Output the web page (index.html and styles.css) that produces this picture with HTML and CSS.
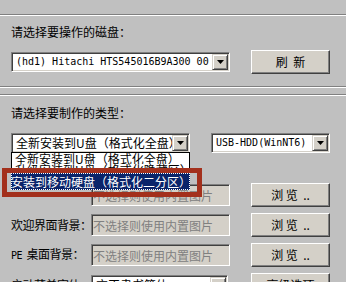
FILE: index.html
```html
<!DOCTYPE html>
<html lang="zh-CN">
<head>
  <meta charset="UTF-8" />
  <title>U盘启动制作</title>
  <link rel="stylesheet" href="styles.css">
</head>
<body>
  <div class="rule"></div>

  <section class="group">
    <label class="caption">请选择要操作的磁盘：</label>
    <div class="row">
      <div class="combo disk">
        <span class="value mono">(hd1) Hitachi HTS545016B9A300 00</span>
        <span class="drop"><svg width="7" height="4" viewBox="0 0 7 4"><path d="M0 0h7L3.5 4z"/></svg></span>
      </div>
      <button type="button" class="btn">刷&nbsp;&nbsp;新</button>
    </div>
  </section>

  <div class="rule near"></div>
  <div class="rule tight"></div>

  <section class="group kind">
    <label class="caption">请选择要制作的类型：</label>
    <div class="row type-row">
      <div class="combo type">
        <span class="value">全新安装到U盘（格式化全盘）</span>
        <span class="drop"><svg width="7" height="4" viewBox="0 0 7 4"><path d="M0 0h7L3.5 4z"/></svg></span>
        <ul class="droplist">
          <li>全新安装到U盘（格式化全盘）</li>
          <li>升级安装到U盘（格式化隐藏区）</li>
          <li class="sel">安装到移动硬盘（格式化二分区）</li>
        </ul>
      </div>
      <div class="combo mode">
        <span class="value mono">USB-HDD(WinNT6)</span>
        <span class="drop"><svg width="7" height="4" viewBox="0 0 7 4"><path d="M0 0h7L3.5 4z"/></svg></span>
      </div>
    </div>

    <div class="fields">
      <div class="field">
        <span class="name"></span>
        <input type="text" class="path" disabled placeholder="不选择则使用内置图片" />
        <button type="button" class="btn">浏&nbsp;览&nbsp;&nbsp;..</button>
      </div>
      <div class="field">
        <span class="name">欢迎界面背景：</span>
        <input type="text" class="path" disabled placeholder="不选择则使用内置图片" />
        <button type="button" class="btn">浏&nbsp;览&nbsp;&nbsp;..</button>
      </div>
      <div class="field">
        <span class="name"><span class="mono">PE</span>&nbsp; 桌面背景：</span>
        <input type="text" class="path" disabled placeholder="不选择则使用内置图片" />
        <button type="button" class="btn">浏&nbsp;览&nbsp;&nbsp;..</button>
      </div>
      <div class="field">
        <span class="name">启动菜单字体：</span>
        <div class="combo font">
          <span class="value">方正隶书简体</span>
          <span class="drop"><svg width="7" height="4" viewBox="0 0 7 4"><path d="M0 0h7L3.5 4z"/></svg></span>
        </div>
        <button type="button" class="btn">高级选项</button>
      </div>
    </div>
  </section>

  <div class="callout"><span class="pick">安装到移动硬盘（格式化二分区）</span></div>
</body>
</html>
```

FILE: styles.css
```css
body {
  margin: 0;
  width: 346px;
  height: 282px;
  overflow: hidden;
  background: #c0c0c0;
  font-family: "Noto Sans CJK SC", "Noto Sans", sans-serif;
  font-size: 12px;
  line-height: 14px;
  color: #000;
}
.mono {
  font-family: "DejaVu Sans Mono", "Liberation Mono", monospace;
  font-size: 10px;
}
.rule {
  margin-top: 14px;
  border-top: 1px solid #808080;
  border-bottom: 1px solid #fff;
}
.rule.near {
  margin-top: 12px;
}
.rule.tight {
  margin-top: 6px;
}
.group {
  padding: 0 16px 0 11px;
}
.caption {
  display: block;
  padding-top: 9px;
}
.kind .caption {
  padding-top: 10px;
}
.row {
  display: flex;
  align-items: center;
  justify-content: space-between;
  height: 24px;
  margin-top: 11px;
}
.type-row {
  height: 20px;
  margin-top: 13px;
}
.combo {
  position: relative;
  display: flex;
  height: 20px;
  box-sizing: border-box;
  padding: 1px;
  background: #fff;
  border: 1px solid;
  border-color: #808080 #fff #fff #808080;
  box-shadow: inset 1px 1px #404040, inset -1px -1px #d4d0c8;
}
.combo .value {
  flex: 1;
  padding-left: 3px;
  line-height: 16px;
  white-space: nowrap;
  overflow: hidden;
}
.drop {
  display: flex;
  align-items: center;
  justify-content: center;
  width: 16px;
  height: 16px;
  box-sizing: border-box;
  background: #d4d0c8;
  border: 1px solid;
  border-color: #d4d0c8 #404040 #404040 #d4d0c8;
  box-shadow: inset 1px 1px #fff, inset -1px -1px #808080;
}
.combo.disk { width: 219px; }
.combo.type { width: 179px; }
.combo.mode { width: 119px; }
.combo.font { width: 137px; }
.btn {
  width: 79px;
  height: 24px;
  box-sizing: border-box;
  padding: 0;
  background: #d4d0c8;
  border: 1px solid;
  border-color: #fff #404040 #404040 #fff;
  box-shadow: inset -1px -1px #808080;
  font: inherit;
  color: #000;
}
.droplist {
  position: absolute;
  left: -1px;
  top: 100%;
  z-index: 2;
  width: 179px;
  box-sizing: border-box;
  margin: 0;
  padding: 0;
  list-style: none;
  background: #fff;
  border: 1px solid #000;
}
.droplist li {
  padding-left: 3px;
  line-height: 11px;
  white-space: nowrap;
  overflow: hidden;
}
.droplist li.sel {
  line-height: 14px;
  background: #0a246a;
  color: #fff;
}
.fields {
  display: flex;
  flex-direction: column;
  gap: 6px;
  margin-top: 30px;
}
.field {
  display: flex;
  align-items: center;
  height: 24px;
}
.field .name {
  width: 80px;
  white-space: nowrap;
  letter-spacing: -0.5px;
}
.path {
  width: 139px;
  height: 22px;
  box-sizing: border-box;
  margin: 0;
  padding: 0 0 0 1px;
  font: inherit;
  background: #d4d0c8;
  border: 1px solid;
  border-color: #808080 #fff #fff #808080;
  box-shadow: inset 1px 1px #404040, inset -1px -1px #d4d0c8;
}
.path::placeholder {
  color: #808080;
  opacity: 1;
}
.field .btn {
  margin-left: auto;
}
.callout {
  position: absolute;
  left: 2px;
  top: 168px;
  z-index: 3;
  width: 200px;
  height: 29px;
  box-sizing: border-box;
  padding-left: 4px;
  border: 5px solid #a3301c;
}
.pick {
  display: block;
  width: 179px;
  height: 17px;
  line-height: 17px;
  background: #0a246a;
  color: #fff;
  white-space: nowrap;
  overflow: hidden;
  outline: 1px dotted #fff;
  outline-offset: -1px;
}
```
